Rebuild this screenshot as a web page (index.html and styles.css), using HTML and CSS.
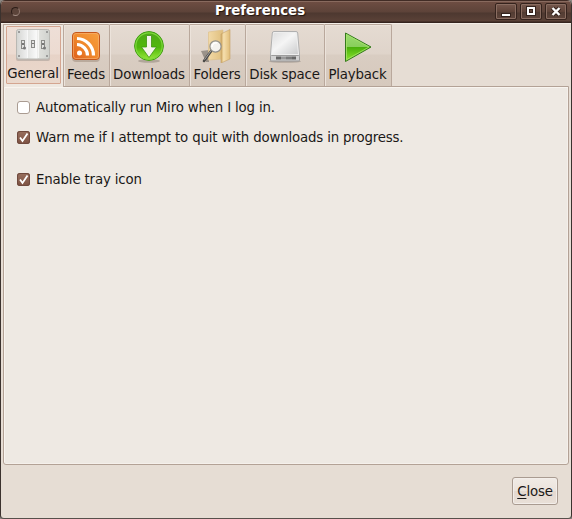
FILE: index.html
```html
<!DOCTYPE html>
<html lang="en">
<head>
<meta charset="utf-8">
<title>Preferences</title>
<link rel="stylesheet" href="styles.css">
</head>
<body>
<div class="window">
  <header class="titlebar">
    <span class="menu-dot"></span>
    <h1 class="title">Preferences</h1>
    <div class="controls">
      <span class="control"><svg width="20" height="15"><path class="glyph-shade" d="M5 9h10v4H5z"/><path class="glyph" d="M6 10h8v2H6z"/></svg></span>
      <span class="control"><svg width="20" height="15"><path class="ring-shade" d="M7 4h6v6H7z"/><path class="ring" d="M7 4h6v6H7z"/></svg></span>
      <span class="control"><svg width="20" height="15"><path class="cross-shade" d="M6.500 4l7 7M13.500 4l-7 7"/><path class="cross" d="M6.500 4l7 7M13.500 4l-7 7"/></svg></span>
    </div>
  </header>
  <nav class="tabs">
    <div class="tab general active">
      <svg class="icon" width="36" height="34" viewBox="0 0 36 34">
        <defs><linearGradient id="plate"><stop offset="0" stop-color="#d3d4d1"/><stop offset=".3" stop-color="#eee"/><stop offset=".34" stop-color="#e4e5e3"/><stop offset=".62" stop-color="#fafafa"/><stop offset=".65" stop-color="#e2e2de"/><stop offset="1" stop-color="#cfd1cd"/></linearGradient></defs>
        <rect x="1" y="3" width="34" height="30" rx="2" fill="#8b8881" opacity=".4"/>
        <rect x="1.500" y="1.500" width="33" height="29.500" rx="2" fill="url(#plate)" stroke="#b9b8b3"/>
        <path d="M12.500 2v28M23.500 2v28" stroke="#fff" opacity=".7"/>
        <g fill="#888"><circle cx="4" cy="4" r="1"/><circle cx="32" cy="4" r="1"/><circle cx="4" cy="28" r="1"/><circle cx="32" cy="28" r="1"/></g>
        <g fill="#e2e2e0" stroke="#8b8b88"><rect x="6.500" y="12.500" width="3" height="8"/><rect x="16.500" y="12.500" width="3" height="7"/><rect x="26.500" y="12.500" width="3" height="8"/></g>
        <g fill="#777"><path d="M7 15h2v2H7zM17 15h2v1h-2zM27 15h2v2h-2z"/><circle cx="9.500" cy="20" r="1.500"/><circle cx="29.500" cy="20" r="1.500"/></g>
      </svg>
      <span class="label">General</span>
    </div>
    <div class="tab feeds">
      <svg class="icon" width="36" height="34" viewBox="0 0 36 34">
        <defs><linearGradient id="rss" x1="1" x2="0" y2="1"><stop offset="0" stop-color="#f7a040"/><stop offset=".5" stop-color="#f08a2c"/><stop offset="1" stop-color="#dd5c1a"/></linearGradient></defs>
        <rect x="4" y="4" width="28" height="29" rx="4" fill="#806b58" opacity=".35"/>
        <rect x="4.500" y="3.500" width="27" height="27" rx="3.500" fill="url(#rss)" stroke="#c5571a"/>
        <rect x="5.500" y="4.500" width="25" height="25" rx="2.500" fill="none" stroke="#f7b478" opacity=".6"/>
        <circle cx="11.500" cy="24" r="2.500" fill="#fff"/>
        <path d="M9 15.500a11 11 0 0 1 10.500 11M9 9.500a17 17 0 0 1 16.500 17" fill="none" stroke="#fff" stroke-width="3.200"/>
      </svg>
      <span class="label">Feeds</span>
    </div>
    <div class="tab downloads">
      <svg class="icon" width="36" height="34" viewBox="0 0 36 34">
        <defs><linearGradient id="disc" x2="0" y2="1"><stop offset="0" stop-color="#4da719"/><stop offset=".55" stop-color="#50b80c"/><stop offset="1" stop-color="#9bea3c"/></linearGradient></defs>
        <ellipse cx="18" cy="32" rx="11" ry="1.800" fill="#776d62" opacity=".4"/>
        <circle cx="18" cy="17" r="14.400" fill="url(#disc)" stroke="#3f9b12"/>
        <circle cx="18" cy="17" r="13.200" fill="none" stroke="#7dd83c" stroke-width="1.200"/>
        <path d="M15.500 6.500h5V18H25.500L18 28.500 10.500 18h5z" fill="#f4f3ed" stroke="#3c9410" stroke-width=".8"/>
      </svg>
      <span class="label">Downloads</span>
    </div>
    <div class="tab folders">
      <svg class="icon" width="36" height="34" viewBox="0 0 36 34">
        <defs><linearGradient id="fold"><stop offset="0" stop-color="#f2d9a6"/><stop offset="1" stop-color="#dfbe7d"/></linearGradient><linearGradient id="flap"><stop offset="0" stop-color="#cda65f"/><stop offset=".3" stop-color="#f6dfae"/><stop offset="1" stop-color="#e0bc78"/></linearGradient></defs>
        <path d="M2 22l8-1v12H7z" fill="#635c55" opacity=".55"/>
        <path d="M9.500 3L24 1v29l-14.500 1z" fill="url(#fold)" stroke="#dec28d" stroke-width=".7"/>
        <path d="M22 5l9-4.500V30L22 34z" fill="url(#flap)" stroke="#c6a269" stroke-width=".6"/>
        <path d="M12.500 21.500L5 32" stroke="#4b4a48" stroke-width="2.600" stroke-linecap="round"/>
        <path d="M12.500 21L5.500 30.700" stroke="#bbb" stroke-width=".8"/>
        <circle cx="16.500" cy="17.500" r="5.600" fill="#f4f2ee" stroke="#92908a" stroke-width="1.200"/>
        <path d="M13 18a4 4 0 0 1 5-4" stroke="#fff" stroke-width="1.500" fill="none"/>
      </svg>
      <span class="label">Folders</span>
    </div>
    <div class="tab disk">
      <svg class="icon" width="36" height="34" viewBox="0 0 36 34">
        <defs><linearGradient id="drive" x2="1" y2="1"><stop offset="0" stop-color="#dedede"/><stop offset=".45" stop-color="#f5f5f5"/><stop offset="1" stop-color="#cbcccd"/></linearGradient></defs>
        <ellipse cx="18" cy="32.500" rx="16" ry="1.300" fill="#77716a" opacity=".4"/>
        <path d="M7 2.500h22q1.500 0 1.700 1.500L32.500 25v6h-29v-6L5.300 4Q5.500 2.500 7 2.500z" fill="#eee" stroke="#b0b0b0" stroke-linejoin="round"/>
        <path d="M7 4h21l1 1.500L31 25H5L6.500 5.500z" fill="url(#drive)"/>
        <rect x="3.500" y="26.500" width="29" height="5.500" rx="1" fill="#d2d2d2" stroke="#9b9b9b"/>
        <path d="M9 27.500h5v3H9zM25 27.500h4v3h-4z" fill="#666"/>
        <path d="M14 27.500h5v3h-5z" fill="#999"/><path d="M19 27.500h6v3h-6z" fill="#7c7c7c"/>
      </svg>
      <span class="label">Disk space</span>
    </div>
    <div class="tab playback">
      <svg class="icon" width="36" height="34" viewBox="0 0 36 34">
        <defs><linearGradient id="play" x2="0" y2="1"><stop offset="0" stop-color="#9cdd72"/><stop offset=".48" stop-color="#88ce5b"/><stop offset=".5" stop-color="#49af0a"/><stop offset="1" stop-color="#8ee831"/></linearGradient></defs>
        <path d="M5.500 4v28.500L31 18z" fill="url(#play)" stroke="#347a1c" stroke-linejoin="round"/>
        <path d="M6.500 5.700v25L29 18z" fill="none" stroke="#a8e26b" stroke-width=".8"/>
      </svg>
      <span class="label">Playback</span>
    </div>
  </nav>
  <main class="panel">
    <div class="option"><span class="box"></span><span class="caption">Automatically run Miro when I log in.</span></div>
    <div class="option"><span class="box checked"><svg width="13" height="13"><path d="M3 6.500l2.500 3.500 5-7.500"/></svg></span><span class="caption">Warn me if I attempt to quit with downloads in progress.</span></div>
    <div class="option spaced"><span class="box checked"><svg width="13" height="13"><path d="M3 6.500l2.500 3.500 5-7.500"/></svg></span><span class="caption">Enable tray icon</span></div>
  </main>
  <footer class="actions"><button class="close" type="button"><span class="mnemonic">C</span>lose</button></footer>
</div>
</body>
</html>
```
FILE: styles.css
```css
* { box-sizing: border-box; }
body {
  margin: 0;
  background: #8d8782;
  font: 13.33px/16px "DejaVu Sans", sans-serif;
  letter-spacing: -0.16px;
  color: #1a1817;
}
.window {
  width: 572px;
  height: 519px;
  display: flex;
  flex-direction: column;
  background: #e6ddd4;
  border: 1px solid #3b322e;
  border-top: 0;
  border-bottom-color: #57504b;
  border-radius: 5px 5px 4px 4px;
  overflow: hidden;
}
.titlebar {
  flex: none;
  height: 23px;
  display: grid;
  grid-template-columns: 24px 1fr 76px;
  background: linear-gradient(#412c25 0 1px, #886a5e 1px 2px, #6d4d42 2px, #5d4339 12px, #4d3830 13px, #5a4137 21px, #35241e 22px);
}
.menu-dot {
  width: 9px;
  height: 9px;
  margin: 7px 0 0 10px;
  border-radius: 50%;
  border: 1px solid #2c1d18;
  border-bottom-color: #a28c83;
  border-right-color: #937a70;
  background: #5c443a;
}
.title {
  margin: 0;
  padding-top: 3px;
  text-align: center;
  color: #fff;
  font-size: 13.33px;
  line-height: 16px;
  letter-spacing: 0;
  text-shadow: 1px 1px 1px #20130e;
}
.controls { display: flex; gap: 3px; padding-top: 3px; }
.control {
  width: 22px;
  height: 17px;
  border: 1px solid #35231d;
  border-radius: 2px;
  background: linear-gradient(#77594e, #604439 50%, #513b32 52%, #60463c);
  box-shadow: inset 0 0 0 1px #8a6d61;
}
.control svg, .box svg, .icon { display: block; }
.glyph { fill: #fff; }
.glyph-shade { fill: #35231d; }
.ring { fill: none; stroke: #fff; stroke-width: 2; }
.ring-shade { fill: none; stroke: #35231d; stroke-width: 4; }
.cross { stroke: #fff; stroke-width: 2.4; }
.cross-shade { stroke: #35231d; stroke-width: 4.4; }
.tabs {
  flex: none;
  display: flex;
  height: 63px;
  padding-left: 2px;
  border-top: 1px solid #f4eee7;
}
.tab {
  height: 62px;
  border: 1px solid #b9a89c;
  border-left: 0;
  border-bottom: 0;
  border-radius: 0 2px 0 0;
  padding: 4px 1px 0 0;
  display: flex;
  flex-direction: column;
  align-items: center;
  background: linear-gradient(#e5dbd2, #dfd4ca 29px, #d9cdc2 30px, #d6c9bd);
  box-shadow: inset 1px 1px 0 #ece3db;
}
.label { margin-top: 4px; white-space: nowrap; }
.general { width: 61px; }
.feeds { width: 46px; }
.downloads { width: 80px; }
.folders { width: 56px; }
.disk { width: 79px; }
.playback { width: 67px; }
.active {
  height: 63px;
  padding-top: 3px;
  border-left: 1px solid #b9a89c;
  background: #eee8e1;
  box-shadow: none;
  position: relative;
}
.active::before {
  content: "";
  position: absolute;
  inset: 1px 2px 3px 2px;
  border: 1px solid #d4a590;
  border-radius: 1px;
  background: linear-gradient(#eedfd7, #ecdbd1 27px, #e7d3c7 28px, #ead8cc);
}
.active > * { position: relative; }
.panel {
  flex: none;
  width: 566px;
  height: 379px;
  margin-left: 2px;
  padding: 13px 13px;
  background: #eee9e3;
  border: 1px solid #b3a296;
  border-radius: 0 0 3px 3px;
  box-shadow: inset 1px 1px #f8f4ef, inset -1px -1px #f5f0eb;
}
.option { display: flex; height: 16px; margin-bottom: 14px; }
.spaced { margin-top: 26px; }
.box {
  width: 13px;
  height: 13px;
  margin: 1px 6px 0 0;
  border: 1px solid #aa9c92;
  border-radius: 3px;
  background: #fff;
}
.box.checked { border: 0; background: linear-gradient(#98705f, #7d5142); box-shadow: inset 0 0 0 1px #6f493d; }
.box path { fill: none; stroke: #fff; stroke-width: 1.8; }
.caption { white-space: nowrap; }
.actions { display: flex; justify-content: flex-end; padding: 12px 13px 0 0; }
.close {
  width: 46px;
  height: 28px;
  padding: 1px 0 0;
  font: inherit;
  letter-spacing: inherit;
  color: inherit;
  border: 1px solid #a99b91;
  border-radius: 3px;
  background: linear-gradient(#f1ebe6, #ebe3dc 50%, #e4d9d0 52%, #e9e0d8);
  box-shadow: inset 0 0 0 1px #f3eeea;
}
.mnemonic { text-decoration: underline; text-underline-offset: 2px; }
```
